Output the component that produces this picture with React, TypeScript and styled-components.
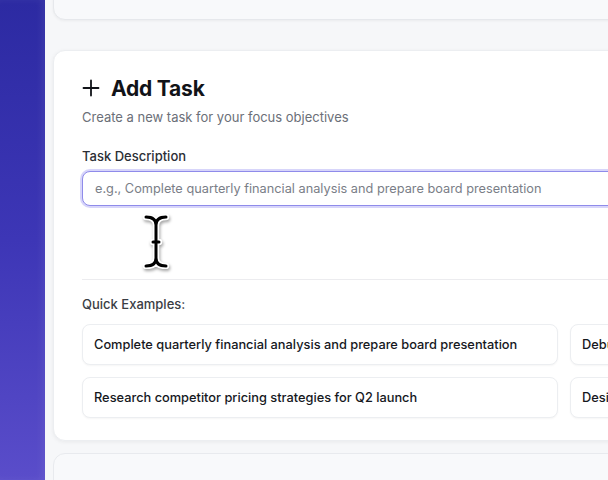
import React from "react";
import styled, { createGlobalStyle } from "styled-components";

const Global = createGlobalStyle`
  html, body { margin: 0; padding: 0; }
  body { font-family: Inter, "Noto Sans", sans-serif; background: #f6f7f9; overflow: hidden; }
  * { box-sizing: border-box; }
`;

const Page = styled.div`
  display: flex;
  width: 608px;
  height: 480px;
  overflow: hidden;
  position: relative;
`;

const Sidebar = styled.div`
  flex: 0 0 45px;
  background: linear-gradient(180deg, #2c2aa2 0%, #3d36b6 50%, #5a4dca 100%);
  box-shadow: inset -4px 0 6px rgba(255,255,255,0.06);
`;

const Main = styled.div`
  flex: 1;
  display: flex;
  flex-direction: column;
  padding-left: 8px;
  overflow: hidden;
  & > * { flex-shrink: 0; }
`;

const TopCard = styled.div`
  width: 900px;
  height: 100px;
  margin-top: -80px;
  background: #f8f9fb;
  border: 1px solid #e6e8ec;
  border-radius: 12px;
  box-shadow: 0 1px 3px rgba(0,0,0,0.05);
`;

const Card = styled.section`
  width: 900px;
  margin-top: 30px;
  background: #ffffff;
  border: 1px solid #eceef1;
  border-radius: 12px;
  box-shadow: 0 1px 4px rgba(0,0,0,0.06);
  padding: 23px 28px 22px 28px;
  display: flex;
  flex-direction: column;
`;

const NextCard = styled.div`
  width: 900px;
  height: 60px;
  margin-top: 12px;
  background: #f8f9fb;
  border: 1px solid #e8eaee;
  border-radius: 12px;
`;

const Title = styled.h2`
  margin: 0;
  display: flex;
  align-items: center;
  gap: 11px;
  font-size: 21px;
  font-weight: 700;
  color: #111318;
  letter-spacing: -0.2px;
  height: 28px;
`;

const Subtitle = styled.p`
  margin: 6px 0 0 0;
  font-size: 13px;
  color: #6b6f78;
  line-height: 18px;
`;

const Label = styled.label`
  margin-top: 21px;
  font-size: 13px;
  font-weight: 500;
  color: #2b2e35;
  line-height: 18px;
`;

const Input = styled.input`
  margin-top: 6px;
  width: 100%;
  height: 35px;
  border: 1.5px solid #8f8bea;
  border-radius: 8px;
  box-shadow: 0 0 0 2px rgba(139, 134, 240, 0.35);
  padding: 0 12px;
  font-family: Inter, "Noto Sans", sans-serif;
  font-size: 12.75px;
  color: #222;
  outline: none;
  &::placeholder { color: #7a7e87; }
`;

const Spacer = styled.div`
  height: 74px;
  border-bottom: 1px solid #ececef;
`;

const SectionLabel = styled.div`
  margin-top: 15px;
  font-size: 13px;
  font-weight: 500;
  color: #3a3d44;
  line-height: 18px;
`;

const Grid = styled.div`
  margin-top: 11px;
  display: grid;
  grid-template-columns: 476px 476px;
  column-gap: 12px;
  row-gap: 12px;
`;

const Example = styled.button`
  height: 41px;
  text-align: left;
  background: #ffffff;
  border: 1px solid #eceef1;
  border-radius: 8px;
  box-shadow: 0 1px 2px rgba(0,0,0,0.04);
  padding: 0 11px;
  font-family: Inter, "Noto Sans", sans-serif;
  font-size: 12.8px;
  font-weight: 500;
  color: #16181d;
  white-space: nowrap;
  overflow: hidden;
`;

const Cursor = styled.svg`
  position: absolute;
  left: 142px;
  top: 214px;
  filter: drop-shadow(1px 2px 1.5px rgba(0,0,0,0.35));
`;

const examples = [
  "Complete quarterly financial analysis and prepare board presentation",
  "Debug the payment gateway integration issue",
  "Research competitor pricing strategies for Q2 launch",
  "Design new onboarding flow for mobile app",
];

export default function App() {
  return (
    <>
      <Global />
      <Page>
        <Sidebar />
        <Main>
          <TopCard />
          <Card>
            <Title>
              <svg width="18" height="18" viewBox="0 0 18 18">
                <path d="M9 1.5v15M1.5 9h15" stroke="#111318" strokeWidth="1.8" strokeLinecap="round" />
              </svg>
              Add Task
            </Title>
            <Subtitle>Create a new task for your focus objectives</Subtitle>
            <Label>Task Description</Label>
            <Input placeholder="e.g., Complete quarterly financial analysis and prepare board presentation" />
            <Spacer />
            <SectionLabel>Quick Examples:</SectionLabel>
            <Grid>
              {examples.map((e) => (
                <Example key={e}>{e}</Example>
              ))}
            </Grid>
          </Card>
          <NextCard />
        </Main>
        <Cursor width="30" height="55" viewBox="0 0 30 55">
          <g fill="none" strokeLinecap="round" strokeLinejoin="round">
            <path d="M4 3 C10 3 14 5 14 11 L14 44 C14 50 10 52 4 52 M24 3 C18 3 14 5 14 11 M14 44 C14 50 18 52 24 52 M11 28 H17" stroke="#ffffff" strokeWidth="6.5" />
            <path d="M4 3 C10 3 14 5 14 11 L14 44 C14 50 10 52 4 52 M24 3 C18 3 14 5 14 11 M14 44 C14 50 18 52 24 52 M11 28 H17" stroke="#000000" strokeWidth="3" />
          </g>
        </Cursor>
      </Page>
    </>
  );
}
